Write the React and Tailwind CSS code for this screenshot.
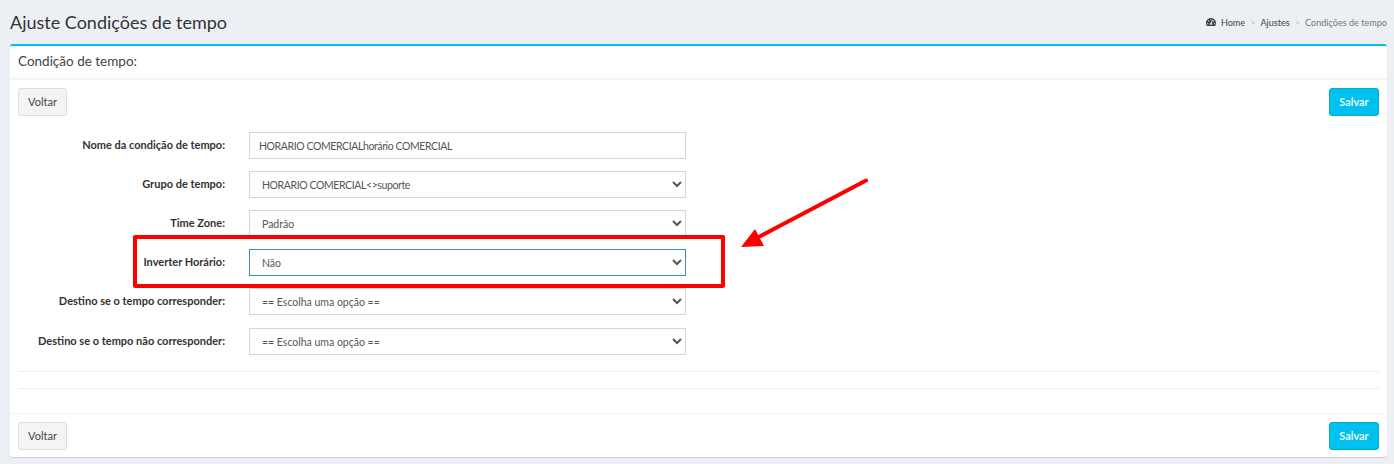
import { FaTachometerAlt } from "react-icons/fa";

const rows = [
  { label: "Grupo de tempo:", value: "HORARIO COMERCIAL<>suporte", caps: true },
  { label: "Time Zone:", value: "Padrão" },
  { label: "Inverter Horário:", value: "Não", focus: true },
  { label: "Destino se o tempo corresponder:", value: "== Escolha uma opção ==" },
  { label: "Destino se o tempo não corresponder:", value: "== Escolha uma opção ==", last: true },
];

function Actions() {
  return (
    <div className="flex justify-between">
      <button className="h-[28px] w-[49px] rounded-[3px] border border-[#dddddd] bg-[#f4f4f4] text-[11px] text-[#444444]">
        Voltar
      </button>
      <button className="h-[28px] w-[50px] rounded-[3px] border border-[#00acd6] bg-[#00c0ef] text-[11px] font-semibold text-white">
        Salvar
      </button>
    </div>
  );
}

function Row({ label, last, children }) {
  return (
    <div className={`flex h-[27px] items-center ${last ? "mt-[1px]" : ""}`}>
      <label className="w-[207px] text-right text-[11px] font-bold whitespace-nowrap text-[#333333]">{label}</label>
      <div className="ml-[24px] w-[437px]">{children}</div>
    </div>
  );
}

export default function App() {
  return (
    <div className="relative h-[464px] overflow-hidden bg-[#ecf0f5] font-['Lato',sans-serif]">
      <div className="flex h-[44px] items-center justify-between pr-[7px] pl-[10px]">
        <h1 className="text-[18px] leading-none text-[#333333]">Ajuste Condições de tempo</h1>
        <div className="flex items-center pt-[1px] text-[9.1px] text-[#444444]">
          <FaTachometerAlt size={10} className="mr-[5px]" />
          <span>Home</span>
          <span className="mx-[5px] text-[#bbbbbb]">&gt;</span>
          <span>Ajustes</span>
          <span className="mx-[5px] text-[#bbbbbb]">&gt;</span>
          <span className="text-[#777777]">Condições de tempo</span>
        </div>
      </div>

      <div className="mx-[10px] mr-[7px] h-[413px] rounded-[3px] border-t-[2px] border-[#00c0ef] bg-white shadow-[0_1px_1px_rgba(0,0,0,0.15)]">
        <div className="flex h-[34px] items-center border-b-[2px] border-[#f4f4f4] pb-[2px] pl-[8px] text-[13.5px] text-[#444444]">
          Condição de tempo:
        </div>
        <div className="px-[8px] pt-[8px]">
          <Actions />
          <div className="mt-[16px] flex flex-col gap-[12px]">
            <Row label="Nome da condição de tempo:">
              <input
                readOnly
                value="HORARIO COMERCIALhorário COMERCIAL"
                className="h-[27px] w-full border border-[#d2d6de] px-[9px] text-[10.5px] tracking-[-0.4px] text-[#555555] outline-none"
              />
            </Row>
            {rows.map((r) => (
              <Row key={r.label} label={r.label} last={r.last}>
                <select
                  defaultValue={r.value}
                  className={`h-[27px] w-full border bg-white px-[8px] text-[10.5px] text-[#555555] outline-none ${
                    r.caps ? "tracking-[-0.4px]" : ""
                  } ${r.focus ? "border-[#3c8dbc]" : "border-[#d2d6de]"}`}
                >
                  <option>{r.value}</option>
                </select>
              </Row>
            ))}
          </div>
          <div className="mt-[16px] border-t border-[#eeeeee]" />
          <div className="mt-[16px] border-t border-[#eeeeee]" />
        </div>
        <div className="mt-[24px] border-t border-[#f4f4f4] px-[8px] pt-[8px]">
          <Actions />
        </div>
      </div>

      {/* red annotation drawn over the form */}
      <div className="absolute top-[235px] left-[133px] h-[53px] w-[592px] rounded-[2px] border-[4px] border-[#ff0000]" />
      <svg className="absolute top-[175px] left-[735px]" width="140" height="80" viewBox="0 0 140 80">
        <path d="M131 5.5 L20 64" stroke="#ff0000" strokeWidth="4" strokeLinecap="round" fill="none" />
        <path d="M6 72 L29 71 L20 54 Z" fill="#ff0000" />
      </svg>
    </div>
  );
}
